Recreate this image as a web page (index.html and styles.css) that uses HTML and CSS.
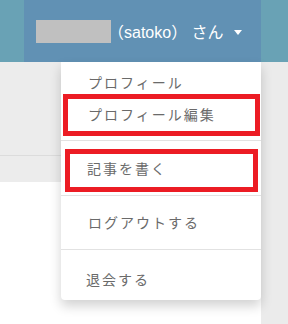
FILE: index.html
```html
<!DOCTYPE html>
<html>
    <head>
        <title>ユーザーメニュー</title>
        <link rel="stylesheet" href="styles.css">
    </head>
    <body>
        <div class="header">
            <div class="user-nav">
                <span class="user-mask"></span>
                <span class="user-name">（satoko） さん</span>
                <span class="caret"></span>
            </div>
        </div>
        <div class="page">
            <div class="main">
                <div class="main-top">
                    <div class="main-top-line"></div>
                </div>
            </div>
            <div class="side"></div>

            <ul class="dropdown">
                <li class="dropdown-head">プロフィール</li>
                <li class="dropdown-item mark mark-first">プロフィール編集</li>
                <li class="divider"></li>
                <li class="dropdown-item mark mark-second">記事を書く</li>
                <li class="divider divider-tight"></li>
                <li class="dropdown-item logout">ログアウトする</li>
                <li class="divider divider-flat"></li>
                <li class="dropdown-item quit">退会する</li>
            </ul>
        </div>
    </body>
</html>
```

FILE: styles.css
```css
body{
    margin: 0;
    font-family: "Liberation Sans", "Noto Sans CJK JP", sans-serif;
    background-color: #ffffff;
}

.header{
    height: 62px;
    background-color: #69a2b5;
}

.user-nav{
    display: flex;
    align-items: center;
    margin-left: 24px;
    width: 225px;
    height: 62px;
    padding-left: 12px;
    background-color: #6191b4;
    color: #ffffff;
    font-size: 16px;
}

.user-mask{
    width: 75px;
    height: 23px;
    background-color: #c0c0c0;
}

.user-name{
    margin-left: -3px;
}

.caret{
    margin-left: 10px;
    margin-top: 2px;
    width: 0;
    height: 0;
    border-top: 5px solid #ffffff;
    border-left: 4px solid transparent;
    border-right: 4px solid transparent;
}

.page{
    position: relative;
    display: flex;
    height: 262px;
}

.main{
    flex: 1;
}

.main-top{
    height: 120px;
    background-color: #ececec;
}

.main-top-line{
    height: 93px;
    border-bottom: 1px solid #dcdcdc;
}

.side{
    width: 27px;
    background-color: #ebebeb;
}

.dropdown{
    position: absolute;
    top: 0;
    left: 61px;
    width: 200px;
    margin: 0;
    padding: 0;
    list-style: none;
    background-color: #ffffff;
    border-radius: 0 0 4px 4px;
    box-shadow: 0 6px 12px rgba(0, 0, 0, 0.18);
    font-family: "Noto Sans CJK JP", sans-serif;
    font-size: 14px;
    letter-spacing: 2px;
    color: #6a6a6a;
}

.dropdown-head{
    height: 22px;
    padding: 10px 0 0 27px;
    line-height: 20px;
}

.mark{
    border: 5px solid #ec1c24;
}

.mark-first{
    margin: 0 1px 0 2px;
    height: 32px;
    padding-left: 20px;
    line-height: 30px;
}

.mark-second{
    margin: 8px 3px 0 4px;
    height: 33px;
    padding-left: 17px;
    line-height: 28px;
}

.divider{
    height: 1px;
    margin-top: 4px;
    background-color: #e2e2e2;
}

.divider-tight{
    margin-top: 3px;
}

.divider-flat{
    margin-top: 0;
}

.logout{
    height: 53px;
    padding-left: 27px;
    line-height: 53px;
}

.quit{
    padding: 18px 0 10px 25px;
    line-height: 22px;
}
```
